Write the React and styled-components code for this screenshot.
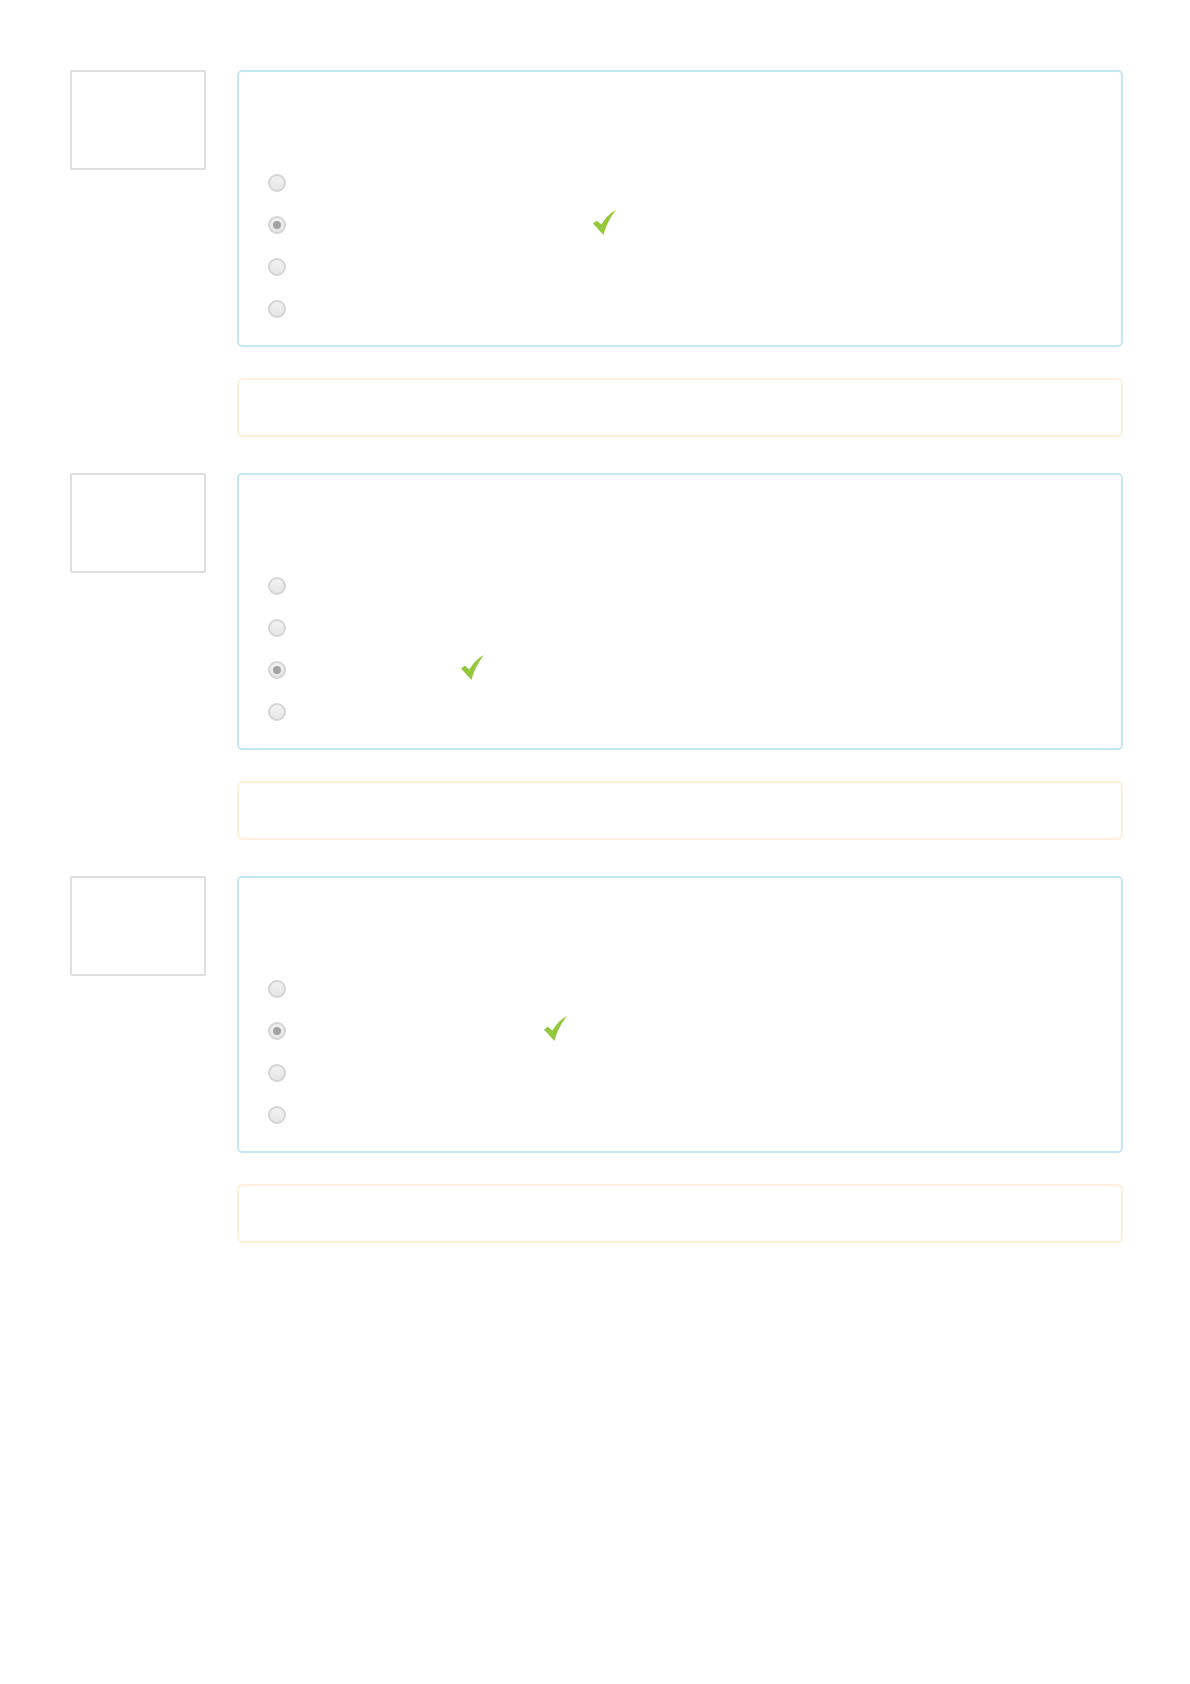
import React from "react";
import styled, { createGlobalStyle } from "styled-components";

const GlobalStyle = createGlobalStyle`
  body {
    margin: 0;
    background: #fff;
    font-family: "Liberation Sans", Arial, sans-serif;
  }
`;

const questions = [
  { answers: 4, chosen: 1, checkAt: 297 },
  { answers: 4, chosen: 2, checkAt: 165 },
  { answers: 4, chosen: 1, checkAt: 248 },
];

const Check = () => (
  <svg width="23" height="25" viewBox="0 0 23 25">
    <path
      d="M0 13.6 L3.8 10.7 L8.4 14.6 C11.8 8.6 16.6 3.4 23 0 C17.8 6.4 13.4 14.6 10.4 25 Z"
      fill="#93c73c"
    />
  </svg>
);

const Quiz = () => {
  return (
    <Page>
      <GlobalStyle />
      {questions.map((q, i) => (
        <Section key={i}>
          <Thumb />
          <Column>
            <QuestionCard>
              <Options>
                {Array.from({ length: q.answers }).map((_, j) => (
                  <Option key={j}>
                    <Radio $checked={j === q.chosen} />
                    {j === q.chosen && (
                      <>
                        <Label $w={q.checkAt} />
                        <Mark>
                          <Check />
                        </Mark>
                      </>
                    )}
                  </Option>
                ))}
              </Options>
            </QuestionCard>
            <Feedback />
          </Column>
        </Section>
      ))}
    </Page>
  );
};

const Page = styled.div`
  padding: 70px 67px 0 70px;
  min-height: 1684px;
  box-sizing: border-box;
`;

const Section = styled.div`
  display: flex;
  gap: 31px;
  margin-bottom: 36px;
`;

const Thumb = styled.div`
  flex: 0 0 auto;
  width: 136px;
  height: 100px;
  box-sizing: border-box;
  border: 2px solid #dedede;
  border-radius: 2px;
`;

const Column = styled.div`
  flex: 1;
  display: flex;
  flex-direction: column;
  gap: 31px;
`;

const QuestionCard = styled.div`
  height: 277px;
  box-sizing: border-box;
  border: 2px solid #c4e9f2;
  border-radius: 5px;
  padding: 90px 0 15px 29px;
`;

const Options = styled.div`
  display: flex;
  flex-direction: column;
`;

const Option = styled.div`
  display: flex;
  align-items: center;
  height: 42px;
`;

const Radio = styled.span`
  position: relative;
  width: 18px;
  height: 18px;
  box-sizing: border-box;
  border-radius: 50%;
  border: 2px solid #d4d4d4;
  background: linear-gradient(#f2f2f2, #e6e6e6);

  &::after {
    content: "";
    display: ${(p) => (p.$checked ? "block" : "none")};
    position: absolute;
    left: 50%;
    top: 50%;
    width: 8px;
    height: 8px;
    margin: -4px 0 0 -4px;
    border-radius: 50%;
    background: #a3a3a3;
  }
`;

const Label = styled.span`
  width: ${(p) => p.$w}px;
  margin-left: 10px;
  color: #fff;
`;

const Mark = styled.span`
  display: flex;
  margin-top: -6px;
`;

const Feedback = styled.div`
  height: 59px;
  box-sizing: border-box;
  border: 2px solid #fdf0da;
  border-radius: 6px;
`;

export default Quiz;
